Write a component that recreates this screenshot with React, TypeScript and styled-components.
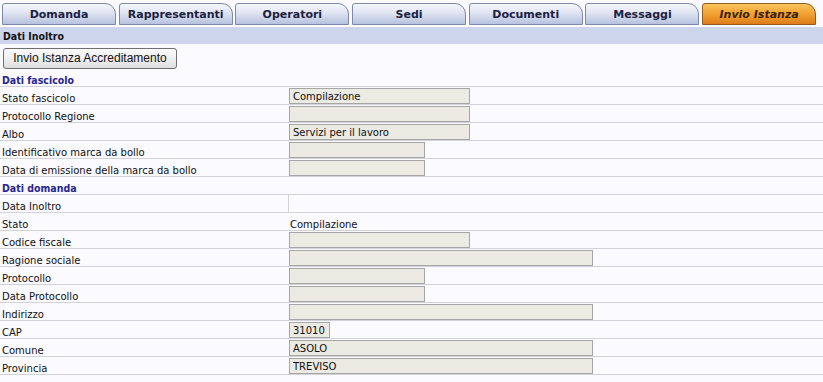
import React from 'react';
import styled, { createGlobalStyle } from 'styled-components';

const Global = createGlobalStyle`
  html, body { margin: 0; padding: 0; background: #fafaff; }
  body { font-family: "DejaVu Sans", Verdana, sans-serif; color: #111; }
`;

const Page = styled.div`
  width: 823px;
`;

const TabBar = styled.div`
  display: flex;
  gap: 2.7px;
  padding: 3px 0 0 2px;
  height: 22px;
`;

const Tab = styled.div<{ $active?: boolean }>`
  box-sizing: border-box;
  width: 114px;
  height: 22px;
  border: 1px solid ${(p) => (p.$active ? '#8d5e22' : '#7e89a8')};
  border-radius: 3px 11px 0 0;
  background: ${(p) =>
    p.$active
      ? 'linear-gradient(#fbc45e 0%, #f3a535 45%, #de7c1a 100%)'
      : 'linear-gradient(#f6f7fc 0%, #dfe4f2 45%, #b7c2df 100%)'};
  display: flex;
  align-items: center;
  justify-content: center;
  font-family: "DejaVu Sans", Verdana, sans-serif;
  font-size: 11px;
  font-weight: bold;
  font-style: ${(p) => (p.$active ? 'italic' : 'normal')};
  color: ${(p) => (p.$active ? '#3a2100' : '#1b2140')};
  padding-top: 1px;
`;

const SubBar = styled.div`
  margin-top: 2px;
  height: 17px;
  background: #cdd5ec;
  padding-left: 3px;
  display: flex;
  align-items: center;
  font-family: "DejaVu Sans Condensed", "DejaVu Sans", sans-serif;
  font-stretch: condensed;
  font-weight: bold;
  font-size: 10.5px;
  color: #111;
`;

const ButtonRow = styled.div`
  padding: 3px 3px 0;
  height: 21px;
`;

const ActionButton = styled.button`
  box-sizing: border-box;
  width: 174px;
  height: 21px;
  border: 1px solid #6f6f6f;
  border-radius: 3px;
  background: linear-gradient(#fbfbfb 0%, #efefef 50%, #dedede 100%);
  font-family: "Liberation Sans", Arial, sans-serif;
  font-size: 12px;
  color: #111;
  padding: 0;
  margin: 0;
`;

const Table = styled.div`
  display: flex;
  flex-direction: column;
`;

const SectionRow = styled.div<{ $h?: number }>`
  box-sizing: border-box;
  height: ${(p) => p.$h ?? 18}px;
  border-bottom: 1px solid #d2d2db;
  padding: 0 0 0 2px;
  display: flex;
  align-items: flex-end;
  font-family: "DejaVu Sans Condensed", "DejaVu Sans", sans-serif;
  font-stretch: condensed;
  font-weight: bold;
  font-size: 10.5px;
  color: #26268c;
`;

const Row = styled.div`
  box-sizing: border-box;
  height: 18px;
  border-bottom: 1px solid #d2d2db;
  display: grid;
  grid-template-columns: 288px 1fr;
`;

const Label = styled.div`
  padding: 0 0 0 2px;
  display: flex;
  align-items: flex-end;
  font-size: 10px;
  color: #111;
  white-space: nowrap;
`;

const Value = styled.div<{ $divider?: boolean }>`
  display: flex;
  align-items: flex-end;
  border-left: 1px solid ${(p) => (p.$divider ? '#d2d2db' : 'transparent')};
  font-size: 10px;
`;

const Field = styled.input<{ $w: number }>`
  box-sizing: border-box;
  width: ${(p) => p.$w}px;
  height: 16px;
  margin: 0;
  padding: 0 0 0 3px;
  border: 1px solid #a6a6a6;
  background: #ebeae3;
  font-family: "DejaVu Sans", Verdana, sans-serif;
  font-size: 10px;
  color: #111;
  outline: none;
`;

const PlainText = styled.span`
  padding-left: 1px;
`;

type Item =
  | { kind: 'section'; title: string; h?: number }
  | { kind: 'field'; label: string; w: number; value?: string }
  | { kind: 'text'; label: string; value: string }
  | { kind: 'empty'; label: string };

const items: Item[] = [
  { kind: 'section', title: 'Dati fascicolo', h: 19 },
  { kind: 'field', label: 'Stato fascicolo', w: 181, value: 'Compilazione' },
  { kind: 'field', label: 'Protocollo Regione', w: 181 },
  { kind: 'field', label: 'Albo', w: 181, value: 'Servizi per il lavoro' },
  { kind: 'field', label: 'Identificativo marca da bollo', w: 136 },
  { kind: 'field', label: 'Data di emissione della marca da bollo', w: 136 },
  { kind: 'section', title: 'Dati domanda' },
  { kind: 'empty', label: 'Data Inoltro' },
  { kind: 'text', label: 'Stato', value: 'Compilazione' },
  { kind: 'field', label: 'Codice fiscale', w: 181 },
  { kind: 'field', label: 'Ragione sociale', w: 304 },
  { kind: 'field', label: 'Protocollo', w: 136 },
  { kind: 'field', label: 'Data Protocollo', w: 136 },
  { kind: 'field', label: 'Indirizzo', w: 304 },
  { kind: 'field', label: 'CAP', w: 41, value: '31010' },
  { kind: 'field', label: 'Comune', w: 304, value: 'ASOLO' },
  { kind: 'field', label: 'Provincia', w: 304, value: 'TREVISO' },
];

const tabs = ['Domanda', 'Rappresentanti', 'Operatori', 'Sedi', 'Documenti', 'Messaggi', 'Invio Istanza'];

export default function App() {
  return (
    <Page>
      <Global />
      <TabBar>
        {tabs.map((t, i) => (
          <Tab key={t} $active={i === tabs.length - 1}>
            {t}
          </Tab>
        ))}
      </TabBar>
      <SubBar>Dati Inoltro</SubBar>
      <ButtonRow>
        <ActionButton type="button">Invio Istanza Accreditamento</ActionButton>
      </ButtonRow>
      <Table>
        {items.map((it, i) => {
          if (it.kind === 'section')
            return (
              <SectionRow key={i} $h={it.h}>
                {it.title}
              </SectionRow>
            );
          return (
            <Row key={i}>
              <Label>{it.label}</Label>
              {it.kind === 'field' && (
                <Value>
                  <Field $w={it.w} readOnly value={it.value ?? ''} />
                </Value>
              )}
              {it.kind === 'text' && (
                <Value>
                  <PlainText>{it.value}</PlainText>
                </Value>
              )}
              {it.kind === 'empty' && <Value $divider />}
            </Row>
          );
        })}
      </Table>
    </Page>
  );
}
